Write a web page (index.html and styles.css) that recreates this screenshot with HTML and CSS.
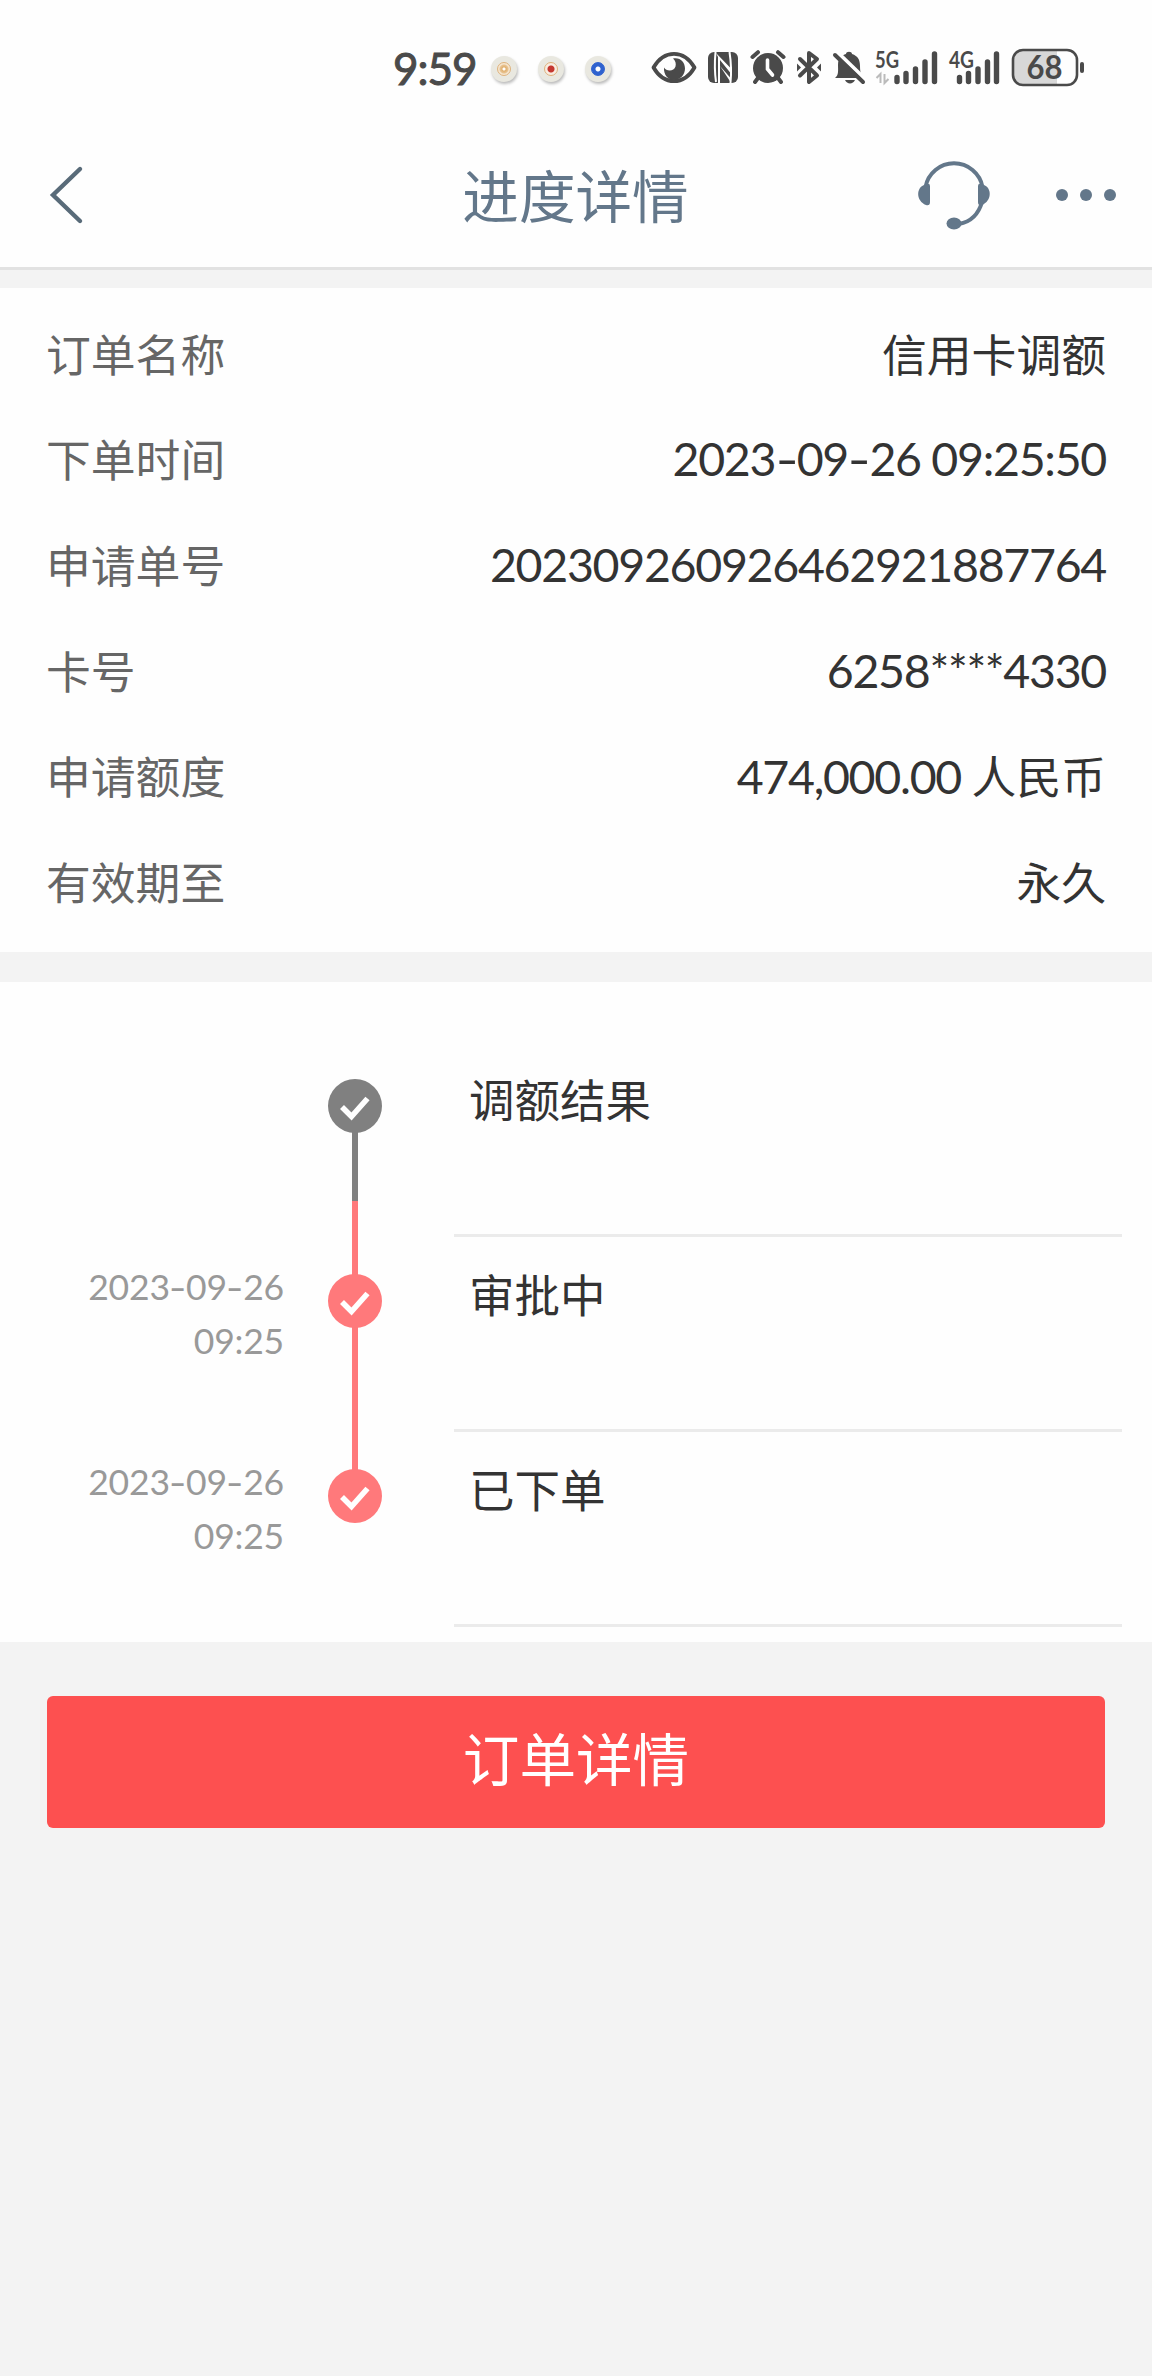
FILE: index.html
```html
<!DOCTYPE html>
<html lang="zh-CN">
	<head>
		<meta charset="UTF-8">
		<title>进度详情</title>
		<link rel="stylesheet" href="styles.css">
	</head>
	<body>
		<div class="status">
			<span class="clock">9:59</span>
			<div class="apps">
				<span class="app"><i class="gold"></i></span>
				<span class="app"><i class="red"></i></span>
				<span class="app"><i class="blue"></i></span>
			</div>
			<!-- 眼睛 -->
			<svg width="46" height="40" viewBox="0 0 46 40">
				<path d="M2.5 19.5C8 10 15 5.800 23 5.800S38 10 43.500 19.500C38 29 31 33.200 23 33.200S8 29 2.500 19.500z" fill="none" stroke="#4a4a4a" stroke-width="3.800" stroke-linejoin="round"/>
				<path d="M22 10.500C29 9 34 14 34 20.500S29 32 23 32S12.500 27 13 19.500C15 23.500 23 24 24.500 18.500C25.300 15.500 24.500 12.500 22 10.500z"/>
			</svg>
			<!-- NFC -->
			<svg width="32" height="40" viewBox="0 0 32 40">
				<rect x="1" y="4" width="30" height="31" rx="6"/>
				<path d="M8.500 4Q7 20 9 34M22.500 4Q25 20 23.500 35" fill="none" stroke="#fff" stroke-width="2"/>
				<path d="M9 5L23.500 20V25L13 12V35H11V9zM13 18L23.500 30V34z" fill="#fff"/>
			</svg>
			<!-- 闹钟 -->
			<svg width="36" height="40" viewBox="0 0 36 40">
				<circle cx="18" cy="20" r="15"/>
				<path d="M2.500 9L8 4.200M33.500 9L28 4.200M8 30L5 34M28 30L31 34" stroke="#4a4a4a" stroke-width="4" stroke-linecap="round"/>
				<path d="M17.500 12V21L22.500 27" fill="none" stroke="#fff" stroke-width="3.600" stroke-linecap="round"/>
			</svg>
			<!-- 蓝牙 -->
			<svg width="26" height="40" viewBox="0 0 26 40">
				<path d="M4 11L21 27.500L13 34V5L21 11L4 27.500" fill="none" stroke="#4a4a4a" stroke-width="4" stroke-linecap="round" stroke-linejoin="round"/>
				<path d="M1 15.500L5 19.500L1 23.500zM25 15.500L21 19.500L25 23.500z"/>
			</svg>
			<!-- 静音 -->
			<svg width="32" height="40" viewBox="0 0 32 40">
				<path d="M2 30C6 27 5 22 5 17C5 10 9 7 13 6C13 3 19 3 19 6C25 8 27 12 27 18C27 24 28 27 31 30z"/>
				<path d="M12 32H22C20 36.500 14 36.500 12 32z"/>
				<path d="M4.500 4.500L34 33" stroke="#fff" stroke-width="4"/>
				<path d="M2 7L30 34" stroke="#4a4a4a" stroke-width="4" stroke-linecap="round"/>
			</svg>
			<svg class="signal" width="63" height="40" viewBox="0 0 63 40">
				<text x="0" y="19.500" textLength="24" lengthAdjust="spacingAndGlyphs">5G</text>
				<path d="M1.500 30L5.500 26V35M9.500 26V35L13.500 31" fill="none" stroke="#bbb" stroke-width="2"/>
				<path class="bars" d="M22 29.500V33.500M31 25.500V33.500M40.500 21V33.500M50 14V33.500M59.500 6V33.500"/>
			</svg>
			<svg class="signal" width="52" height="40" viewBox="0 0 52 40">
				<text x="0" y="19.500" textLength="25" lengthAdjust="spacingAndGlyphs">4G</text>
				<path class="bars" d="M10.500 29.500V33.500M19.500 25.500V33.500M29 21V33.500M38.500 14V33.500M47.500 6V33.500"/>
			</svg>
			<svg class="battery" width="74" height="40" viewBox="0 0 74 40">
				<path d="M46 3H13Q3 3 3 12V28Q3 37 13 37H46z" fill="#d8d8d8"/>
				<rect x="2" y="2" width="64" height="35" rx="10" fill="none" stroke="#4a4a4a" stroke-width="2.600"/>
				<rect x="69" y="14" width="4" height="11" rx="2"/>
				<text x="15.500" y="31" textLength="36" lengthAdjust="spacingAndGlyphs">68</text>
			</svg>
		</div>
		<div class="header">
			<a href="#" class="back">
				<svg width="34" height="60" viewBox="0 0 34 60"><path d="M31 4L4 30L31 56"/></svg>
			</a>
			<h1>进度详情</h1>
			<div class="tools">
				<svg width="74" height="74" viewBox="0 0 74 74">
					<path d="M8.500 29A29 29 0 0 1 65.500 29M65 44C61 58 53 64 42 66" fill="none" stroke="#63778a" stroke-width="4"/>
					<path d="M13 28V44Q13 48 9 47C-1 43 -1 30 7 27Q13 24 13 28zM61 28V44Q61 48 65 47C75 43 75 30 67 27Q61 24 61 28z"/>
					<ellipse cx="37" cy="65.500" rx="7.500" ry="6"/>
				</svg>
				<svg width="60" height="12" viewBox="0 0 60 12">
					<circle cx="6" cy="6" r="6"/><circle cx="30" cy="6" r="6"/><circle cx="54" cy="6" r="6"/>
				</svg>
			</div>
		</div>
		<ul class="info">
			<li><span>订单名称</span><b>信用卡调额</b></li>
			<li><span>下单时间</span><b class="num">2023<i>-</i>09<i>-</i>26 09:25:50</b></li>
			<li><span>申请单号</span><b class="num">202309260926462921887764</b></li>
			<li><span>卡号</span><b class="num">6258****4330</b></li>
			<li><span>申请额度</span><b><span class="num">474,000.00 </span>人民币</b></li>
			<li><span>有效期至</span><b>永久</b></li>
		</ul>
		<ul class="steps">
			<li class="wait">
				<div class="time"></div>
				<div class="rail"><div class="dot"><svg width="54" height="54" viewBox="0 0 54 54"><path d="M14 28L23.500 37.500L39.500 19.500"/></svg></div></div>
				<div class="name">调额结果</div>
			</li>
			<li>
				<div class="time">2023<i>-</i>09<i>-</i>26<br>09:25</div>
				<div class="rail"><div class="dot"><svg width="54" height="54" viewBox="0 0 54 54"><path d="M14 28L23.500 37.500L39.500 19.500"/></svg></div></div>
				<div class="name">审批中</div>
			</li>
			<li>
				<div class="time">2023<i>-</i>09<i>-</i>26<br>09:25</div>
				<div class="rail"><div class="dot"><svg width="54" height="54" viewBox="0 0 54 54"><path d="M14 28L23.500 37.500L39.500 19.500"/></svg></div></div>
				<div class="name">已下单</div>
			</li>
		</ul>
		<a href="#" class="btn">订单详情</a>
	</body>
</html>
```
FILE: styles.css
```css
*{
	padding: 0;
	margin: 0;
	box-sizing: border-box;
}
body{
	min-height: 2376px;
	background: #f3f3f3;
	font-family: "Noto Sans CJK SC", sans-serif;
	font-size: 44.8px;
	color: #333;
}
ul{
	list-style: none;
}
a{
	text-decoration: none;
}
svg{
	display: block;
	flex: none;
	overflow: visible;
}
/* 状态栏 */
.status{
	display: flex;
	justify-content: flex-end;
	align-items: center;
	height: 135px;
	padding-right: 67px;
	background: #fefefe;
	fill: #4a4a4a;
	gap: 10.5px;
}
.clock{
	font: 44px/60px Lato, sans-serif;
	letter-spacing: -1px;
	color: #4a4a4a;
	-webkit-text-stroke: 1px #4a4a4a;
}
.apps{
	display: flex;
	gap: 21px;
	margin: 2px 29px 0 4px;
}
.app{
	display: flex;
	align-items: center;
	justify-content: center;
	width: 26px;
	height: 26px;
	border-radius: 50%;
	background: #e9e8e0;
	box-shadow: 1px 2px 3px #bbb;
}
.app i{
	width: 14px;
	height: 14px;
	border-radius: 50%;
	border: 1px solid #dfb27c;
	background: radial-gradient(#fff 1px, #e0b070 2px, #e8c391 4px, #f6e6cf 5px);
}
.app .red{
	background: radial-gradient(#c5372f 3px, #f8ece0 4px);
}
.app .blue{
	border-color: #2f62cf;
	background: radial-gradient(#fff 2px, #2f62cf 3px);
}
.signal text{
	font: bold 22px Lato, sans-serif;
}
.bars{
	fill: none;
	stroke: #4a4a4a;
	stroke-width: 5.4;
	stroke-linecap: round;
}
.battery text{
	font: bold 32px Lato, sans-serif;
}
/* 标题栏 */
.header{
	display: grid;
	grid-template-columns: 1fr auto 1fr;
	align-items: center;
	height: 135px;
	padding: 0 36px 12px 49px;
	border-bottom: 3px solid #e2e2e2;
	background: #fefefe;
	fill: #63778a;
}
.back path{
	fill: none;
	stroke: #596b79;
	stroke-width: 4.4;
	stroke-linecap: round;
}
.header h1{
	margin-left: -14px;
	padding-bottom: 4px;
	font-size: 56.6px;
	font-weight: normal;
	line-height: 80px;
	color: #63778a;
}
.tools{
	display: flex;
	align-items: center;
	justify-content: flex-end;
	gap: 65px;
}
/* 订单信息 */
.info{
	margin-top: 18px;
	padding: 12px 46px;
	height: 664px;
	background: #fefefe;
}
.info li{
	display: flex;
	justify-content: space-between;
	align-items: center;
	height: 105.6px;
	line-height: 66px;
	color: #666;
}
.info b{
	font-weight: normal;
	color: #333;
}
.num{
	font-family: Lato, "Noto Sans CJK SC", sans-serif;
	font-size: 46.5px;
	letter-spacing: -1.3px;
}
/* 日期里的横线拉宽 */
.num i,
.time i{
	display: inline-block;
	width: 1.22em;
	margin: 0 -.38em;
	text-align: center;
	font-style: normal;
	transform: scaleX(1.35);
}
/* 进度 */
.steps{
	margin-top: 30px;
	padding: 60px 30px 15px 0;
	background: #fefefe;
}
.steps li{
	display: grid;
	grid-template-columns: 284px 142px 1fr;
	height: 195px;
}
.time{
	padding-top: 23px;
	text-align: right;
	font: 35.5px/54px Lato, sans-serif;
	letter-spacing: -.2px;
	color: #999;
}
.rail{
	display: flex;
	justify-content: center;
	padding-top: 37px;
	background: linear-gradient(#ff797b, #ff797b) center / 6px 100% no-repeat;
}
.wait .rail{
	background: linear-gradient(transparent 40px, #808080 40px, #808080 159px, #ff797b 159px) center / 6px 100% no-repeat;
}
.steps li:last-child .rail{
	background-size: 6px 60px;
	background-position: top center;
}
.dot{
	width: 54px;
	height: 54px;
	border-radius: 50%;
	background: #ff797b;
}
.wait .dot{
	background: #808080;
}
.dot path{
	fill: none;
	stroke: #fff;
	stroke-width: 5.6;
}
.name{
	margin-left: 28px;
	padding: 23px 0 0 15px;
	border-bottom: 3px solid #ebebeb;
	font-size: 45.5px;
	line-height: 66px;
}
.btn{
	display: block;
	height: 132px;
	margin: 54px 47px 0;
	border-radius: 6px;
	background: #fd5050;
	color: #fff;
	font-size: 56.6px;
	line-height: 121px;
	text-align: center;
}
```
